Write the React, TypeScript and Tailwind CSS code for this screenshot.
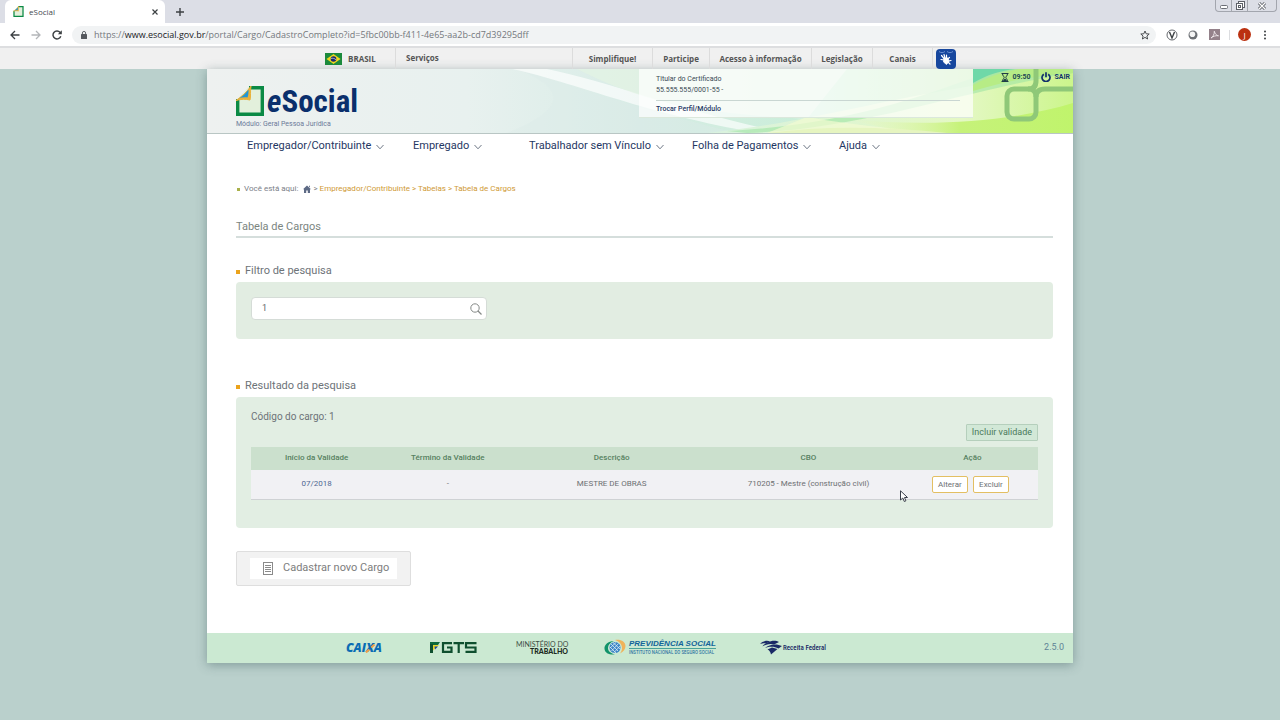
import { useState } from 'react';
import type { ReactNode } from 'react';

const GOV_LINKS: { label: string; width: string }[] = [
  { label: 'Simplifique!', width: 'w-20' },
  { label: 'Participe', width: 'w-[57px]' },
  { label: 'Acesso à informação', width: 'w-[102px]' },
  { label: 'Legislação', width: 'w-[61px]' },
  { label: 'Canais', width: 'w-[60px]' },
];

const MENU: { label: string; width: string }[] = [
  { label: 'Empregador/Contribuinte', width: 'w-[166px]' },
  { label: 'Empregado', width: 'w-[116px]' },
  { label: 'Trabalhador sem Vínculo', width: 'w-[163px]' },
  { label: 'Folha de Pagamentos', width: 'w-[147px]' },
  { label: 'Ajuda', width: 'w-12' },
];

const COLUMNS: { label: string; width: string }[] = [
  { label: 'Início da Validade', width: 'w-1/6' },
  { label: 'Término da Validade', width: 'w-1/6' },
  { label: 'Descrição', width: 'w-1/4' },
  { label: 'CBO', width: 'w-1/4' },
  { label: 'Ação', width: 'w-1/6' },
];

const ROWS = [
  {
    inicio: '07/2018',
    termino: '-',
    descricao: 'MESTRE DE OBRAS',
    cbo: '710205 - Mestre (construção civil)',
  },
];

function SheetLogo({ className }: { className: string }) {
  return (
    <svg className={className} viewBox="0 0 28 30" aria-hidden="true">
      <path d="M12 1.500H26.500V28.500H1.500V13Z" fill="#e3f0dc" />
      <path d="M13 1.700H26.300V28.300H1.700V13" fill="none" stroke="#0b8a45" strokeWidth="3.400" />
      <path d="M15 0C14 6 15 10 14 14C10 13 5 13 0 14.500C5 11 11 6 15 0Z" fill="#e9b23b" stroke="#e9b23b" />
      <path d="M12.500 3.500C12.500 6 12.500 9 11.500 11.500C8.500 11 5.500 11.500 3 12.500C7 10 10 7 12.500 3.500Z" fill="#2196d6" />
    </svg>
  );
}

function BrowserBar() {
  return (
    <div className="font-['Open_Sans','Noto_Sans',sans-serif]">
      <div className="flex h-[23px] items-start justify-between bg-[#dcdee6]">
        <div className="flex h-full items-center">
          <div className="ml-[5px] flex h-full w-40 items-center rounded-t-md bg-white pr-1.5 pl-2">
            <SheetLogo className="h-[11px] w-[11px]" />
            <span className="ml-[5px] flex-1 text-[8px] text-[#45494d]">eSocial</span>
            <button type="button" aria-label="Fechar guia">
              <svg className="h-2 w-2" viewBox="0 0 8 8" stroke="#3c4043" strokeWidth="1.200">
                <path d="M1.500 1.500 6.500 6.500M6.500 1.500 1.500 6.500" />
              </svg>
            </button>
          </div>
          <button type="button" className="ml-2.5" aria-label="Nova guia">
            <svg className="h-2.5 w-2.5" viewBox="0 0 10 10" stroke="#3c4043" strokeWidth="1.400">
              <path d="M5 1V9M1 5H9" />
            </svg>
          </button>
        </div>
        <div className="mr-[3px] flex h-3 w-[62px] rounded-b-sm border border-t-0 border-[#a3a6ae]">
          <button type="button" className="flex flex-1 items-center justify-center border-r border-[#a3a6ae]" aria-label="Minimizar">
            <svg className="h-3 w-3" viewBox="0 0 12 12" fill="#fff" stroke="#6b6e76">
              <rect x="2.500" y="5.500" width="7" height="3" rx="1" />
            </svg>
          </button>
          <button type="button" className="flex flex-1 items-center justify-center border-r border-[#a3a6ae]" aria-label="Restaurar">
            <svg className="h-3 w-3" viewBox="0 0 12 12" fill="#fff" stroke="#5d6068">
              <rect x="4.500" y="1.500" width="6" height="6" />
              <rect x="2.500" y="3.500" width="6" height="6" />
              <rect x="4.500" y="5.500" width="2" height="2" />
            </svg>
          </button>
          <button type="button" className="flex w-7 items-center justify-center" aria-label="Fechar">
            <svg className="h-3 w-3" viewBox="0 0 12 12">
              <path d="M3 3 9 9M9 3 3 9" stroke="#5d6068" strokeWidth="3" />
              <path d="M3 3 9 9M9 3 3 9" stroke="#fff" strokeWidth="1.200" />
            </svg>
          </button>
        </div>
      </div>

      <div className="flex h-[25px] items-center border-b-2 border-[#dddee0] bg-white pr-2.5 pl-2.5">
        <button type="button" aria-label="Voltar">
          <svg className="h-2.5 w-2.5" viewBox="0 0 10 10" fill="none" stroke="#3c4043" strokeWidth="1.300">
            <path d="M9.500 5H1M5 1 1 5 5 9" />
          </svg>
        </button>
        <button type="button" className="ml-[11px]" aria-label="Avançar">
          <svg className="h-2.5 w-2.5" viewBox="0 0 10 10" fill="none" stroke="#b4b6b9" strokeWidth="1.300">
            <path d="M.5 5H9M5 1 9 5 5 9" />
          </svg>
        </button>
        <button type="button" className="ml-[11px]" aria-label="Recarregar">
          <svg className="h-2.5 w-2.5" viewBox="0 0 10 10" fill="none" stroke="#3c4043" strokeWidth="1.400">
            <path d="M8.800 6.300A4 4 0 1 1 8 2.300L9 3.400" />
            <path d="M9.800.3V4.300H5.800Z" fill="#3c4043" stroke="none" />
          </svg>
        </button>
        <div className="ml-2.5 flex h-[18px] flex-1 items-center rounded-full bg-[#f1f3f4] pr-1.5 pl-2">
          <svg className="h-2 w-2" viewBox="0 0 8 8" aria-hidden="true">
            <rect x="1" y="3" width="6" height="5" rx=".6" fill="#55595e" />
            <path d="M2.400 3.200V2A1.600 1.600 0 0 1 5.600 2V3.200" fill="none" stroke="#55595e" strokeWidth=".9" />
          </svg>
          <div className="ml-1.5 flex-1 truncate text-[9px] text-[#74787d]">
            https://<span className="text-[#202124]">www.esocial.gov.br</span>
            /portal/Cargo/CadastroCompleto?id=5fbc00bb-f411-4e65-aa2b-cd7d39295dff
          </div>
          <button type="button" aria-label="Favoritos">
            <svg className="h-2.5 w-2.5" viewBox="0 0 10 10" fill="none" stroke="#4a4d51">
              <path d="M5 1 6.200 3.800 9.200 4 6.900 6 7.600 9 5 7.400 2.400 9 3.100 6 .8 4 3.800 3.800Z" />
            </svg>
          </button>
        </div>
        <svg className="ml-2.5 h-3 w-3" viewBox="0 0 12 12" fill="none" aria-hidden="true">
          <circle cx="6" cy="6" r="5" stroke="#66696e" />
          <path d="M3.500 3 6 9 8.500 3" stroke="#3c4043" strokeWidth="1.400" />
        </svg>
        <svg className="ml-2.5 h-2.5 w-2.5" viewBox="0 0 10 10" aria-hidden="true">
          <circle cx="5" cy="5" r="4.500" fill="#6d7075" />
          <circle cx="4.400" cy="4.200" r="2.800" fill="#f5f5f5" />
        </svg>
        <svg className="ml-[11px] h-[11px] w-[11px]" viewBox="0 0 11 11" aria-hidden="true">
          <rect width="11" height="11" fill="#94818a" />
          <path d="M2 9C4 8 5.500 5 5.300 2.200C6 5 7.500 6.500 9.500 6.800C7 6.400 4.500 7 2 9Z" fill="none" stroke="#efe9ec" strokeWidth=".9" />
        </svg>
        <div className="ml-[9px] h-2.5 w-px bg-[#dcdde0]" />
        <button type="button" className="ml-2 h-[13px] w-[13px] rounded-full bg-[#bb3110] text-center text-[8px] leading-[13px] text-white">
          J
        </button>
        <button type="button" className="ml-[9px] flex w-2.5 justify-center" aria-label="Menu">
          <svg className="h-2.5 w-1" viewBox="0 0 4 10" fill="#3c4043">
            <circle cx="2" cy="1.500" r="1" />
            <circle cx="2" cy="5" r="1" />
            <circle cx="2" cy="8.500" r="1" />
          </svg>
        </button>
      </div>
    </div>
  );
}

function GovBar() {
  return (
    <div className="flex h-[21px] justify-center bg-[#f0f0f0] font-['Open_Sans',sans-serif] text-[8px] font-bold text-[#555]">
      <div className="flex w-[81px] items-center border-r border-[#dcdcdc] pl-2.5">
        <svg className="h-3 w-[17px]" viewBox="0 0 17 12" aria-hidden="true">
          <rect width="17" height="12" fill="#1c8a3c" />
          <path d="M8.500 1 15.500 6 8.500 11 1.500 6Z" fill="#f0d51e" />
          <circle cx="8.500" cy="6" r="2.800" fill="#1b2a6b" />
          <path d="M6 5.400C7.500 5 9.800 5.400 11 6.800" fill="none" stroke="#dfe6ee" strokeWidth=".7" />
        </svg>
        <a href="#brasil" className="ml-1.5">BRASIL</a>
      </div>
      <div className="flex w-[177px] items-center border-r border-[#dcdcdc] pb-0.5 pl-2.5">
        <a href="#servicos">Serviços</a>
      </div>
      {GOV_LINKS.map((link) => (
        <div key={link.label} className={`flex items-center justify-center border-r border-[#dcdcdc] ${link.width}`}>
          <a href="#gov">{link.label}</a>
        </div>
      ))}
      <div className="flex w-8 items-center pl-[3px]">
        <button type="button" className="h-5 w-5 rounded-sm bg-[#17479e]" aria-label="VLibras">
          <svg className="h-5 w-5" viewBox="0 0 20 20" fill="#fff">
            <path d="M3 2.500C5 4 7 4 9 2.500M11 2.500C13 4 15 4 17 2.500" fill="none" stroke="#7fa0dc" strokeWidth=".8" />
            <path
              d="M5.500 6.500 8 9.500M8 5.500 9 9M10.500 6 10.500 9.500M5 10.500 8 11M13.500 8.500 11 10.500M15 11.500 12 12M14 15 11.500 12.500"
              fill="none"
              stroke="#fff"
              strokeWidth="1.200"
              strokeLinecap="round"
            />
            <path d="M8 9H12L13 12.500 10.500 15.500 7.500 13Z" stroke="#fff" strokeWidth=".8" strokeLinejoin="round" />
          </svg>
        </button>
      </div>
    </div>
  );
}

function HeaderArt() {
  return (
    <svg className="absolute inset-0 h-full w-full" viewBox="0 0 866 64" preserveAspectRatio="none" aria-hidden="true">
      <defs>
        <linearGradient id="base" x1="0" x2="1" y1="0" y2="0">
          <stop offset="0" stopColor="#eef1f0" />
          <stop offset=".3" stopColor="#e8f1ef" />
          <stop offset=".5" stopColor="#d8ece6" />
          <stop offset=".7" stopColor="#c9eed8" />
          <stop offset="1" stopColor="#b5e98a" />
        </linearGradient>
        <linearGradient id="lime" x1="0" x2="1" y1="0" y2="0">
          <stop offset="0" stopColor="#eef8c8" stopOpacity="0" />
          <stop offset=".5" stopColor="#c6f27a" />
          <stop offset="1" stopColor="#c0f46c" />
        </linearGradient>
        <linearGradient id="leaf" x1="0" x2="1" y1="0" y2="0">
          <stop offset="0" stopColor="#d9f2df" />
          <stop offset=".7" stopColor="#e4f8c4" />
          <stop offset="1" stopColor="#ccf58c" />
        </linearGradient>
      </defs>
      <rect width="866" height="64" fill="url(#base)" />
      <path d="M310 0C380 22 450 45 530 64H300C360 40 360 20 310 0Z" fill="#dcebe8" opacity=".4" />
      <path d="M305 0C370 14 430 42 540 62L560 60C470 40 400 12 340 0Z" fill="#fff" opacity=".65" />
      <path d="M370 0C430 30 480 44 600 50L640 0Z" fill="#e2f3e4" opacity=".8" />
      <path d="M500 64C620 52 700 20 866 4V64Z" fill="url(#leaf)" />
      <path d="M520 62C640 56 720 26 790 0H866V4C760 20 660 60 540 64Z" fill="#9fe5a4" opacity=".6" />
      <path d="M766 14C780 6 792 2 808 0H766Z" fill="#6fd8a8" />
      <path d="M766 22C800 12 830 6 866 4V0H812C795 3 780 8 766 16Z" fill="#b7ec86" />
      <path d="M600 48C680 62 760 66 840 64H560Z" fill="#f2fbd2" opacity=".7" />
      <path d="M640 50C720 58 800 54 866 34V64H700Z" fill="url(#lime)" />
      <path d="M560 64C620 56 680 58 740 64Z" fill="#e6f5c0" />
      <g fill="none" stroke="#8fc878" strokeWidth="5">
        <rect x="800" y="20" width="29" height="30" rx="7" />
        <path d="M829 0V12Q829 20 821 20M866 20H838Q829 20 829 28" />
      </g>
    </svg>
  );
}

function Header() {
  return (
    <header className="relative flex h-[65px] items-start overflow-hidden border-b border-[#b9c6c4]">
      <HeaderArt />
      <div className="relative ml-[29px] pt-4">
        <a href="#inicio" className="flex h-[31px] items-end">
          <SheetLogo className="h-[30px] w-7" />
          <span className="ml-[3px] font-['Roboto_Condensed','Liberation_Sans_Narrow',sans-serif] text-[31px] leading-7 font-bold text-[#0a2f6c]">
            <i>e</i>Social
          </span>
        </a>
        <p className="mt-[3px] text-[7px] leading-[10px] text-[#6b7a99]">Módulo: Geral Pessoa Jurídica</p>
      </div>
      <div className="relative ml-auto h-[49px] w-[334px] border-b border-[#dbe8dc] bg-white/70 px-[17px] pt-[5px] text-[7px] text-[#3a4a55]">
        <p className="leading-[11px]">Titular do Certificado</p>
        <p className="leading-[11px]">55.555.555/0001-55 -</p>
        <a href="#perfil" className="mt-1 mr-[-4px] block border-t border-[#c9d6d2] pt-[3px] leading-[10px] font-medium text-[#1f3763]">
          Trocar Perfil/Módulo
        </a>
      </div>
      <div className="relative flex w-[100px] items-center justify-end gap-[3px] pt-[3px] pr-[3px] text-[7px] leading-[10px] font-bold text-[#1f4a55]">
        <svg className="h-[9px] w-2" viewBox="0 0 8 9" fill="none" stroke="#1f3c48" aria-hidden="true">
          <path d="M.5.5H7.500M.5 8.500H7.500M1.500.5C1.500 3 3.200 3.500 3.200 4.500S1.500 6 1.500 8.500M6.500.5C6.500 3 4.800 3.500 4.800 4.500S6.500 6 6.500 8.500" />
          <path d="M2.500 8 4 6 5.500 8Z" fill="#1f3c48" />
        </svg>
        <span>09:50</span>
        <a href="#sair" className="ml-2 flex items-center gap-[3px] text-[#12366b]">
          <svg className="h-2.5 w-2.5" viewBox="0 0 10 10" fill="none" stroke="#12306b" strokeWidth="1.700" aria-hidden="true">
            <path d="M2.800 2.200A4 4 0 1 0 7.200 2.200M5 .3V5.200" />
          </svg>
          SAIR
        </a>
      </div>
    </header>
  );
}

function SectionTitle({ children }: { children: ReactNode }) {
  return (
    <h2 className="flex items-center gap-[5px] pt-px text-[11px] leading-5 text-[#6d7378]">
      <span className="mt-0.5 h-1 w-1 bg-[#eba31c]" />
      {children}
    </h2>
  );
}

function Footer() {
  return (
    <footer className="flex h-[30px] items-center bg-[#cbe9d2] pr-[9px] pl-[139px]">
      <div className="flex items-center gap-9">
        <div className="relative w-12 font-['Open_Sans',sans-serif] text-[12px] leading-4 font-extrabold text-[#0a6cb4] italic">
          CAIXA
          <svg className="absolute top-1 left-[19px] h-[9px] w-[11px]" viewBox="0 0 11 9" stroke="#f0a04a" strokeWidth="2" aria-hidden="true">
            <path d="M1 8.500 4.200 5.500M6.200 3.500 9.500.5" />
          </svg>
        </div>
        <svg className="h-[11px] w-[50px]" viewBox="0 0 50 11" fill="none" stroke="#0e4f2e" strokeWidth="2.200" role="img" aria-label="FGTS">
          <path d="M0 0H10L8 3H0Z" fill="#0e6a3c" stroke="none" />
          <path d="M0 2H3V11H0Z" fill="#0e4f2e" stroke="none" />
          <path d="M3 3H9L3 8.500Z" fill="#e9d72c" stroke="none" />
          <path d="M4.500 4.500H8L5 7.500Z" fill="#17479e" stroke="none" />
          <path d="M22 1.200H13V9.800H21.500V5.500H17M23.500 1.200H34M28.700 1.200V11M46.500 1.200H36V5.500H45.500V9.800H35.500" />
        </svg>
        <p className="w-[52px] text-right font-['Lato',sans-serif] text-[7px] leading-[7px] whitespace-nowrap text-[#3b4d44]">
          MINISTÉRIO DO
          <br />
          <b className="font-black text-[#1c2a22]">TRABALHO</b>
        </p>
        <div className="flex w-[120px] items-center gap-[3px]">
          <svg className="h-[17px] w-[22px]" viewBox="0 0 22 17" aria-hidden="true">
            <path d="M10 2C4 2 0 6 .5 10C1 14 5 16 11 15.500C6 14 4 12 4 9C4 6 6 3.500 10 2Z" fill="#12936a" />
            <path d="M11 1C17 0 21.500 3 21.500 7C21.500 10 19.500 13 16 14.500C18 12 18.500 9 17.500 6.500C16.500 4 14.500 2 11 1Z" fill="#efb35a" />
            <circle cx="11" cy="8.500" r="5.500" fill="#3c86c6" />
            <path d="M7 5 14 12M9 3.500 16 10M6 8 12 14M14.500 4.500 7.500 12M16 7 10 13.500M12 3.500 6 9" stroke="#dcecf6" strokeWidth=".8" />
          </svg>
          <div className="whitespace-nowrap text-[#12649a]">
            <p className="border-b border-[#4aa39a] font-['Liberation_Sans',sans-serif] text-[8px] leading-[9px] font-bold italic">
              PREVIDÊNCIA SOCIAL
            </p>
            <p className="font-['Roboto_Condensed','Roboto',sans-serif] text-[5px] leading-[7px]">
              INSTITUTO NACIONAL DO SEGURO SOCIAL
            </p>
          </div>
        </div>
        <div className="flex items-center gap-px">
          <svg className="h-[15px] w-[22px]" viewBox="0 0 22 15" fill="#1a2a66" aria-hidden="true">
            <path d="M0 4C3 1 7 0 10 1.500L6 3.500C3.500 3 2 3.500 0 4Z" />
            <path d="M2 6.500C6 2 14-1 19 2L14 4.500C10 3 6 4.500 2 6.500Z" />
            <path d="M5 8C9 4.500 16 3 22 6L18.500 8.500C14 6 9 6.500 5 8Z" />
            <path d="M7.500 9.500 12 7.500 17.500 9 11 14.500C10.500 12 9.500 10.500 7.500 9.500Z" />
          </svg>
          <span className="font-['Roboto_Condensed','Roboto',sans-serif] text-[7px] leading-3 font-medium whitespace-nowrap text-[#1a2a66]">
            Receita Federal
          </span>
        </div>
      </div>
      <span className="ml-auto text-[9px] text-[#5f8496]">2.5.0</span>
    </footer>
  );
}

export default function App() {
  const [filtro, setFiltro] = useState('1');

  return (
    <div className="min-h-screen bg-[#bad0cc] pb-14 font-['Roboto',sans-serif]">
      <BrowserBar />
      <GovBar />

      <div className="mx-auto w-full max-w-[866px] bg-white shadow-[0_2px_10px_rgba(60,90,90,0.45)]">
        <Header />

        <nav className="flex h-6 items-center pl-10 text-[11px] text-[#1f3763]">
          {MENU.map((item) => (
            <div key={item.label} className={item.width}>
              <button type="button" className="flex items-center gap-[5px] whitespace-nowrap">
                {item.label}
                <svg className="mt-0.5 h-2 w-2" viewBox="0 0 8 8" fill="none" stroke="#6f7886" aria-hidden="true">
                  <path d="M.5 2 4 5.800 7.500 2" />
                </svg>
              </button>
            </div>
          ))}
        </nav>

        <main className="pt-[23px] pr-5 pb-[47px] pl-[29px]">
          <div className="flex h-4 items-center pl-px text-[8px] text-[#7b8088]">
            <span className="mr-1 h-[3px] w-[3px] bg-[#a9b04a]" />
            Você está aqui:
            <a href="#inicio" className="mr-0.5 ml-[5px]" aria-label="Início">
              <svg className="h-2 w-2" viewBox="0 0 8 8" fill="#5d6a85">
                <path d="M4 .5 8 4.200H7V8H4.800V5.500H3.200V8H1V4.200H0L4 .5ZM6 .8H7V2.500L6 1.600Z" />
              </svg>
            </a>
            &gt;
            <span className="ml-0.5 text-[#cf9a35]">
              <a href="#empregador">Empregador/Contribuinte</a> &gt; <a href="#tabelas">Tabelas</a> &gt;{' '}
              <a href="#cargos">Tabela de Cargos</a>
            </span>
          </div>

          <h1 className="mt-5 border-b-2 border-[#d5dedc] pt-px text-[11px] leading-[18px] text-[#7b857f]">Tabela de Cargos</h1>

          <section className="mt-[22px]">
            <SectionTitle>Filtro de pesquisa</SectionTitle>
            <div className="mt-px rounded-sm bg-[#e2ede2] px-[15px] pt-[15px] pb-[19px]">
              <div className="flex h-[23px] w-[236px] items-center rounded-sm border border-[#d5dcd7] bg-white pr-1 pl-2.5">
                <input
                  type="text"
                  aria-label="Filtro de pesquisa"
                  value={filtro}
                  onChange={(e) => setFiltro(e.target.value)}
                  className="w-full text-[9px] text-[#62666a] outline-none"
                />
                <button type="button" aria-label="Pesquisar">
                  <svg className="h-3 w-3" viewBox="0 0 12 12" fill="none" stroke="#858987">
                    <circle cx="5" cy="5" r="4.200" />
                    <path d="M8 8 11.500 11.500" strokeWidth="1.300" />
                  </svg>
                </button>
              </div>
            </div>
          </section>

          <section className="mt-9">
            <SectionTitle>Resultado da pesquisa</SectionTitle>
            <div className="relative mt-px rounded-sm bg-[#e2eee3] px-[15px] pt-[13px] pb-7">
              <p className="text-[10px] leading-[14px] text-[#6d7378]">Código do cargo: 1</p>
              <div className="flex justify-end">
                <button type="button" className="h-[17px] rounded-[1px] border border-[#b5cfbc] bg-[#d2e8d7] px-[5px] text-[9px] leading-[15px] text-[#4a7a5a]">
                  Incluir validade
                </button>
              </div>
              <table className="mt-1.5 w-full table-fixed text-center text-[8px]">
                <thead>
                  <tr className="h-[23px] bg-[#cbe0cd] text-[#56805f]">
                    {COLUMNS.map((col) => (
                      <th key={col.label} scope="col" className={`pb-0.5 font-medium ${col.width}`}>
                        {col.label}
                      </th>
                    ))}
                  </tr>
                </thead>
                <tbody>
                  {ROWS.map((row) => (
                    <tr key={row.inicio} className="h-[29px] border-b border-[#cfd2d4] bg-[#f1f1f4] text-[#6d7073]">
                      <td className="text-[#4f6792]">{row.inicio}</td>
                      <td>{row.termino}</td>
                      <td>{row.descricao}</td>
                      <td>{row.cbo}</td>
                      <td className="pt-px">
                        <div className="flex justify-center gap-[5px] pr-1">
                          <button type="button" className="h-[17px] w-9 rounded-xs border border-[#e3bf62] bg-white leading-[15px] text-[#6d7073]">
                            Alterar
                          </button>
                          <button type="button" className="h-[17px] w-9 rounded-xs border border-[#e3bf62] bg-white leading-[15px] text-[#6d7073]">
                            Excluir
                          </button>
                        </div>
                      </td>
                    </tr>
                  ))}
                </tbody>
              </table>
              <svg className="absolute top-[93px] right-[145px] h-3 w-2" viewBox="0 0 8 12" fill="#fff" stroke="#3a3f4a" aria-hidden="true">
                <path d="M.5.8V10L2.800 8 4.300 11.500 5.900 10.800 4.500 7.500H7.500Z" />
              </svg>
            </div>
          </section>

          <div className="mt-[23px] flex h-[35px] w-[175px] items-center justify-center rounded-xs border border-[#dedede] bg-[#f2f2f2]">
            <button type="button" className="flex h-[21px] w-[147px] items-center bg-white pl-[13px] text-[11px] whitespace-nowrap text-[#7d7d7d]">
              <svg className="mr-2.5 h-[13px] w-[10px]" viewBox="0 0 10 13" fill="none" stroke="#8a8a8a" aria-hidden="true">
                <rect x=".5" y=".5" width="9" height="12" />
                <path d="M2 3.500H8M2 5.500H8M2 7.500H8M2 9.500H8" />
              </svg>
              Cadastrar novo Cargo
            </button>
          </div>
        </main>

        <Footer />
      </div>
    </div>
  );
}
